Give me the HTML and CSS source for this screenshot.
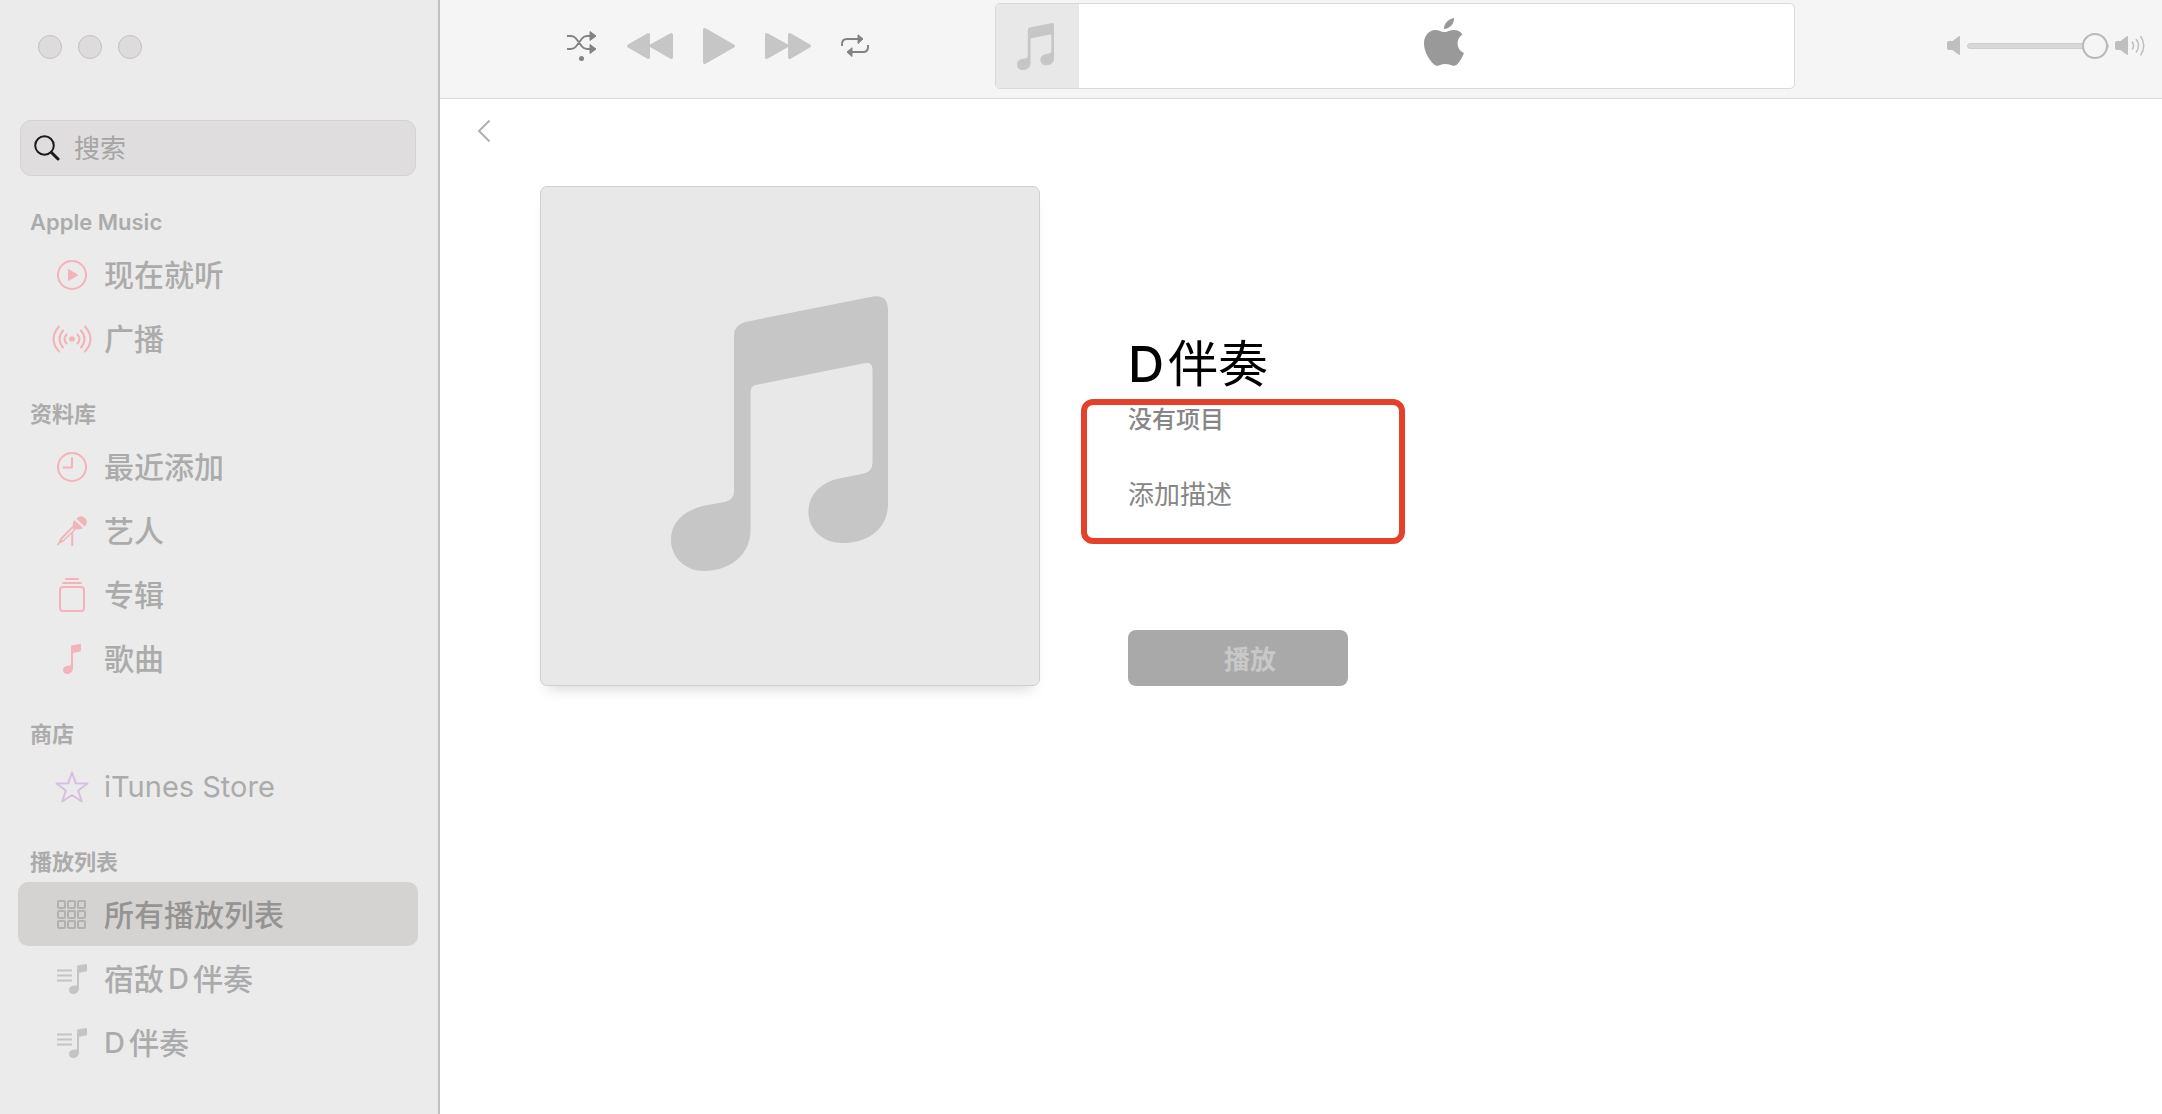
FILE: index.html
```html
<!DOCTYPE html>
<html lang="zh-CN">
<head>
<meta charset="utf-8">
<meta name="viewport" content="width=device-width, initial-scale=1">
<title>音乐</title>
<link rel="stylesheet" href="styles.css">
</head>
<body>
<svg class="defs" aria-hidden="true">
  <symbol id="beamed-note" viewBox="0 0 210 266">
    <path d="M61 38Q61 28 72 25L193 1Q210-3 210 14V201C210 226 190 239 166 239C147 239 133 226 133 209C133 191 147 179 165 176L186 172Q195 170 195 161V71Q195 63 187 65L82 86Q77 87 77 93V226C77 250 58 266 32 266C14 266 0 253 0 236C0 218 14 207 32 203L53 199Q61 197 61 189Z"/>
  </symbol>
  <symbol id="queue-note" viewBox="0 0 30 30">
    <path d="M0 6.500H15M0 11.500H15M0 16.500H15" stroke="currentColor" stroke-width="2"/>
    <path d="M20 2.600Q20 1.400 21.200 1.200L29 0Q30 0 30 1V6.300Q30 7.300 29 7.500L22 8.800V24C22 27.400 19.600 30 16.400 30C14 30 12 28.400 12 26C12 23.500 14 21.900 16.300 21.700L19 21.400Q20 21.200 20 20Z"/>
  </symbol>
</svg>
<div class="window">
  <aside class="sidebar">
    <div class="lights">
      <button class="light" aria-label="关闭"></button>
      <button class="light" aria-label="最小化"></button>
      <button class="light" aria-label="缩放"></button>
    </div>
    <label class="search">
      <svg class="search-icon" width="26" height="26" viewBox="0 0 26 26" fill="none" stroke="#1c1c1c" stroke-width="2" stroke-linecap="round"><circle cx="10.500" cy="10.500" r="9.300"/><path d="M17.500 17.500L24 24" stroke-width="3"/></svg>
      <input class="search-input" type="search" placeholder="搜索" aria-label="搜索">
    </label>
    <nav class="nav">
      <h2 class="group-title">Apple Music</h2>
      <a class="item" href="#"><span class="icon pink"><svg width="30" height="30" viewBox="0 0 30 30"><circle cx="15" cy="15" r="14" fill="none" stroke="currentColor" stroke-width="2"/><path d="M11 9.800Q11 8.800 12 9.300L20.500 14.300Q21.500 15 20.500 15.700L12 20.700Q11 21.200 11 20.200Z"/></svg></span>现在就听</a>
      <a class="item" href="#"><span class="icon pink"><svg width="40" height="28" viewBox="0 0 40 28" fill="none" stroke="currentColor" stroke-width="2" stroke-linecap="round"><circle cx="20" cy="14" r="2.800" fill="currentColor" stroke="none"/><path d="M14.500 9.500Q10.500 14 14.500 18.500M25.500 9.500Q29.500 14 25.500 18.500M11 5.500Q4 14 11 22.500M29 5.500Q36 14 29 22.500M7 1.500Q-4 14 7 26.500M33 1.500Q44 14 33 26.500"/></svg></span>广播</a>
      <h2 class="group-title">资料库</h2>
      <a class="item" href="#"><span class="icon pink"><svg width="30" height="30" viewBox="0 0 30 30" fill="none" stroke="currentColor" stroke-width="2"><circle cx="15" cy="15" r="14"/><path d="M15 6V15.500H6.500" stroke-linecap="round" stroke-linejoin="round"/></svg></span>最近添加</a>
      <a class="item" href="#"><span class="icon pink"><svg width="30" height="30" viewBox="0 0 30 30"><path d="M19.300 2.800C22-.8 26-.4 28.300 2.200C30.500 5 29.800 8.300 27.800 10.500Z"/><path d="M17.600 4.300L26 12C23.500 13.700 21 13.700 19.500 12.900L16.200 16V29Q16.200 30 15.200 30T14.200 29V18L6.500 25.500Q5 27 3 27.300L1.300 29.400L0 28.500L1.800 26Q2 24 3.500 22L16 9.500C15.400 7.500 16.200 5.500 17.600 4.300ZM15.800 12.200L5 23.500L5.800 24.300L17 13.500Z" fill-rule="evenodd"/></svg></span>艺人</a>
      <a class="item" href="#"><span class="icon pink"><svg width="26" height="34" viewBox="0 0 26 34" fill="none" stroke="currentColor" stroke-width="2"><rect x="1" y="9" width="24" height="24" rx="3"/><path d="M4 5H22M7 1H19" stroke-linecap="round"/></svg></span>专辑</a>
      <a class="item" href="#"><span class="icon pink"><svg width="18" height="30" viewBox="0 0 18 30"><path d="M8 2.600Q8 1.400 9.200 1.200L17 0Q18 0 18 1V6.300Q18 7.300 17 7.500L10 9V24C10 27.400 7.600 30 4.400 30C2 30 0 28.400 0 26C0 23.500 2 21.900 4.300 21.700L7 21.400Q8 21.200 8 20Z"/></svg></span>歌曲</a>
      <h2 class="group-title">商店</h2>
      <a class="item" href="#"><span class="icon purple"><svg width="34" height="32" viewBox="0 0 34 32" fill="none" stroke="currentColor" stroke-width="2" stroke-linejoin="round"><path d="M17 1.500L20.800 12.300L32.500 12.500L23.200 19.500L26.700 30.500L17 24L7.300 30.500L10.800 19.500L1.500 12.500L13.200 12.300Z"/></svg></span><span class="store">iTunes Store</span></a>
      <h2 class="group-title">播放列表</h2>
      <a class="item selected" href="#" aria-current="page"><span class="icon gray"><svg width="30" height="30" viewBox="0 0 30 30" fill="none" stroke="currentColor" stroke-width="2"><rect x="1" y="1" width="7" height="7" rx="1"/><rect x="11" y="1" width="7" height="7" rx="1"/><rect x="21" y="1" width="7" height="7" rx="1"/><rect x="1" y="11" width="7" height="7" rx="1"/><rect x="11" y="11" width="7" height="7" rx="1"/><rect x="21" y="11" width="7" height="7" rx="1"/><rect x="1" y="21" width="7" height="7" rx="1"/><rect x="11" y="21" width="7" height="7" rx="1"/><rect x="21" y="21" width="7" height="7" rx="1"/></svg></span>所有播放列表</a>
      <a class="item" href="#"><span class="icon gray"><svg width="30" height="30"><use href="#queue-note"/></svg></span>宿敌<span class="latin">D</span>伴奏</a>
      <a class="item" href="#"><span class="icon gray"><svg width="30" height="30"><use href="#queue-note"/></svg></span><span class="latin first">D</span>伴奏</a>
    </nav>
  </aside>
  <div class="main">
    <header class="toolbar">
      <div class="controls">
        <button class="control" aria-label="随机播放"><svg width="30" height="32" viewBox="0 0 30 32" fill="none" stroke="#838383" stroke-width="2"><path d="M0 6H4Q7 6 9 8.500L15 16.500Q17 19 20 19H23M0 19H4Q7 19 9 16.500L15 8.500Q17 6 20 6H23"/><path d="M23 1.500L29 6L23 10.500ZM23 14.500L29 19L23 23.500Z" fill="#838383" stroke-width="1" stroke-linejoin="round"/><circle cx="14.500" cy="28.500" r="2.500" fill="#838383" stroke="none"/></svg></button>
        <button class="control" aria-label="上一首"><svg width="46" height="26" viewBox="0 0 46 26"><path d="M1 11.500L20 .5Q23-1 23 2V11.500L43 .5Q46-1 46 2V24Q46 27 43 25.500L23 14V24Q23 27 20 25.500L1 14.500Q-1 13 1 11.500Z"/></svg></button>
        <button class="control" aria-label="播放"><svg width="32" height="36" viewBox="0 0 32 36"><path d="M0 2Q0-1 3 .5L31 16.500Q33 18 31 19.500L3 35.500Q0 37 0 34Z"/></svg></button>
        <button class="control" aria-label="下一首"><svg width="46" height="26" viewBox="0 0 46 26"><path d="M45 11.500L26 .5Q23-1 23 2V11.500L3 .5Q0-1 0 2V24Q0 27 3 25.500L23 14V24Q23 27 26 25.500L45 14.500Q47 13 45 11.500Z"/></svg></button>
        <button class="control" aria-label="重复"><svg width="28" height="24" viewBox="0 0 28 24" fill="none" stroke="#838383" stroke-width="2"><path d="M1 12V10Q1 5 6 5H17M27 11V13Q27 18 22 18H11"/><path d="M17 .8L22 5L17 9.500ZM11 13.800L6 18L11 22.500Z" fill="#838383" stroke-width="1" stroke-linejoin="round"/></svg></button>
      </div>
      <div class="lcd">
        <div class="lcd-art"><svg width="37" height="47"><use href="#beamed-note"/></svg></div>
        <div class="lcd-body"><svg width="40" height="48" viewBox="0 0 40 48"><path d="M30 0C30.500 5 26 11 20 11C19.500 6 24.500 .7 30 0Z"/><path d="M38.500 16.500C31.500 20.500 32 31.500 40 35C38.500 39.500 35.500 44 32.500 47Q30 48.500 27.500 47.300Q21 44.500 15.500 47.300Q12.500 48.700 10 46.500C4 40.500 0 33 0 25.500C0 15.500 8 9.500 16 13Q20 15 24 13.200C30 11 35.500 12 38.500 16.500Z"/></svg></div>
      </div>
      <div class="volume">
        <svg width="14" height="20" viewBox="0 0 14 20"><path d="M0 7Q0 5 2 5H5.500L11.500 .5Q13 -.5 13 1V18Q13 19.500 11.500 18.500L5.500 14H2Q0 14 0 12Z"/></svg>
        <input class="slider" type="range" min="0" max="100" value="100" aria-label="音量">
        <svg width="30" height="22" viewBox="0 0 30 22"><path d="M0 8Q0 6 2 6H5.500L11.500 1.500Q13 .5 13 2V19Q13 20.500 11.500 19.500L5.500 15H2Q0 15 0 13Z"/><path d="M17 6.500Q20 10.500 17 14.500M21 4Q26 10.500 21 17.500M25.500 1Q32 10.500 25.500 20.500" fill="none" stroke="currentColor" stroke-width="1.500"/></svg>
      </div>
    </header>
    <main class="content">
      <button class="back" aria-label="返回"><svg width="14" height="24" viewBox="0 0 14 24" fill="none" stroke="#b0b0b0" stroke-width="2"><path d="M12.500 1.500L2 12L12.500 22.500"/></svg></button>
      <section class="album">
        <div class="cover"><svg width="217" height="275"><use href="#beamed-note"/></svg></div>
        <div class="details">
          <h1 class="title"><span class="title-latin">D</span>伴奏</h1>
          <div class="meta">
            <p class="count">没有项目</p>
            <p class="description">添加描述</p>
            <div class="highlight"></div>
          </div>
          <button class="play" disabled>播放</button>
        </div>
      </section>
    </main>
  </div>
</div>
</body>
</html>
```
FILE: styles.css
```css
* { box-sizing: border-box; }
body {
  margin: 0;
  background: #fff;
  font-family: Inter, "Noto Sans CJK SC", sans-serif;
}
button { margin: 0; padding: 0; border: 0; background: none; font: inherit; }
svg { display: block; fill: currentColor; }
svg[fill="none"] { fill: none; }
.defs { position: absolute; width: 0; height: 0; }
.window { display: flex; min-height: 100vh; }

/* Sidebar */
.sidebar {
  flex: 0 0 440px;
  min-width: 0;
  padding: 35px 20px 20px 18px;
  border-right: 2px solid #c1c1c1;
  background: #ebebeb;
}
.lights { display: flex; gap: 16px; padding-left: 20px; }
.light { width: 24px; height: 24px; border: 1px solid #c3c1c2; border-radius: 50%; background: #dddbdc; }
.search {
  display: flex;
  align-items: center;
  gap: 14px;
  height: 56px;
  margin: 61px 2px 2px;
  padding: 0 13px;
  border: 1px solid #d3d1d2;
  border-radius: 11px;
  background: #dfddde;
}
.search-icon { flex: none; }
.search-input {
  flex: 1;
  width: 0;
  min-width: 0;
  padding: 2px 0 0;
  border: 0;
  outline: 0;
  background: none;
  color: #444;
  font: 26px/40px Inter, "Noto Sans CJK SC", sans-serif;
}
.search-input::placeholder { color: #a6a5a6; opacity: 1; }
.group-title {
  height: 64px;
  margin: 0;
  padding: 24px 12px 0;
  color: #acabab;
  font-size: 22px;
  font-weight: 600;
  line-height: 40px;
}
.item {
  display: flex;
  align-items: center;
  height: 64px;
  padding-top: 2px;
  border-radius: 10px;
  color: #acabab;
  font-size: 30px;
  font-weight: 500;
  line-height: 62px;
  text-decoration: none;
}
.selected { background: #d4d3d1; color: #959493; }
.icon { display: flex; justify-content: center; width: 40px; margin: 0 12px 0 34px; }
.pink { color: #f2b3bb; }
.purple { color: #d8bfe0; }
.gray { color: #c5c4c4; }
.selected .gray { color: #b2b1b0; }
.latin { margin: 0 4px; font-size: 29px; }
.first { margin-left: 0; }
.store { font-size: 29px; font-weight: 400; }

/* Toolbar */
.main { flex: 1; min-width: 0; }
.toolbar {
  display: flex;
  align-items: flex-start;
  height: 99px;
  padding: 3px 17px 0 127px;
  border-bottom: 1px solid #dcdcdc;
  background: #f5f5f5;
}
.controls { display: flex; align-items: center; gap: 30px; height: 86px; color: #c6c6c6; }
.control { color: inherit; }
.lcd {
  display: flex;
  flex: 0 1 800px;
  height: 86px;
  margin-left: 126px;
  overflow: hidden;
  border: 1px solid #d9d9d9;
  border-radius: 5px;
  background: #fff;
}
.lcd-art { display: grid; flex: 0 0 83px; place-items: center; padding-right: 4px; background: #e8e8e8; color: #c6c6c6; }
.lcd-body { display: flex; flex: 1; align-items: center; justify-content: center; padding: 0 0 8px 14px; color: #999; }
.volume { display: flex; align-items: center; gap: 6px; height: 86px; margin-left: auto; color: #bfbfbf; }
.slider { width: 142px; height: 26px; margin: 0; appearance: none; background: none; }
.slider::-webkit-slider-runnable-track {
  height: 6px;
  border: 1px solid #cecece;
  border-radius: 3px;
  background: #d8d8d8;
}
.slider::-webkit-slider-thumb {
  width: 26px;
  height: 26px;
  margin-top: -11px;
  appearance: none;
  border: 2px solid #b8b8b8;
  border-radius: 50%;
  background: #f5f5f5;
}

/* Playlist page */
.content { padding: 20px 40px 40px 37px; }
.back { display: block; }
.album { display: flex; gap: 88px; padding: 43px 0 0 63px; }
.cover {
  display: grid;
  flex: 0 0 500px;
  height: 500px;
  place-items: center;
  padding: 0 22px 6px 0;
  border: 1px solid #d0d0d0;
  border-radius: 7px;
  background: #e8e8e8;
  box-shadow: 0 10px 14px -8px rgba(0, 0, 0, .18);
  color: #c6c6c6;
}
.details { display: flex; flex: 1; flex-direction: column; align-items: flex-start; padding-top: 142px; }
.title { margin: 0; font-size: 50px; font-weight: 400; line-height: 72px; }
.title-latin { margin-right: 4px; font-weight: 500; }
.meta { position: relative; color: #868686; }
.count { margin: 0; font-size: 24px; font-weight: 500; line-height: 40px; }
.description { margin: 35px 0 0; font-size: 26px; line-height: 40px; }
.highlight {
  position: absolute;
  top: -1px;
  left: -47px;
  width: 324px;
  height: 145px;
  border: 6px solid #e5402a;
  border-radius: 12px;
}
.play {
  width: 220px;
  height: 56px;
  margin-top: auto;
  padding: 0 0 2px 24px;
  border-radius: 8px;
  background: #a9a9a9;
  color: #c8c8c8;
  font-size: 26px;
  font-weight: 700;
}
```
